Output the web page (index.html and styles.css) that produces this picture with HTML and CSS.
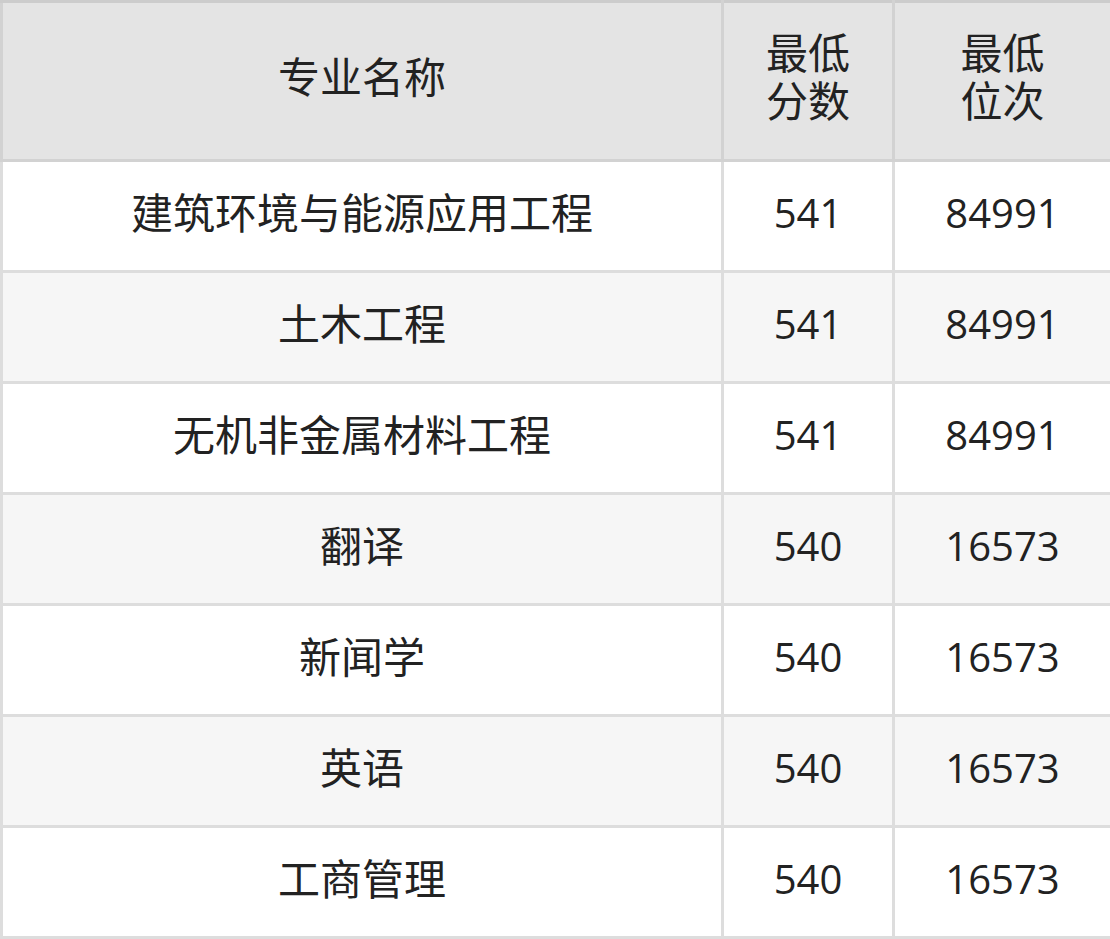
FILE: index.html
```html
<!DOCTYPE html>
<html lang="zh-CN">
<head>
<meta charset="utf-8">
<title>专业分数</title>
<link rel="stylesheet" href="styles.css">
</head>
<body>
<table class="score-table">
  <colgroup>
    <col class="col-name">
    <col class="col-score">
    <col class="col-rank">
  </colgroup>
  <thead>
    <tr>
      <th>专业名称</th>
      <th>最低<br>分数</th>
      <th>最低<br>位次</th>
    </tr>
  </thead>
  <tbody>
    <tr><td>建筑环境与能源应用工程</td><td class="num">541</td><td class="num">84991</td></tr>
    <tr><td>土木工程</td><td class="num">541</td><td class="num">84991</td></tr>
    <tr><td>无机非金属材料工程</td><td class="num">541</td><td class="num">84991</td></tr>
    <tr><td>翻译</td><td class="num">540</td><td class="num">16573</td></tr>
    <tr><td>新闻学</td><td class="num">540</td><td class="num">16573</td></tr>
    <tr><td>英语</td><td class="num">540</td><td class="num">16573</td></tr>
    <tr><td>工商管理</td><td class="num">540</td><td class="num">16573</td></tr>
  </tbody>
</table>
</body>
</html>
```

FILE: styles.css
```css
html, body {
  margin: 0;
  padding: 0;
  background: #ffffff;
}

.score-table {
  width: 1110px;
  border-collapse: collapse;
  table-layout: fixed;
  font-family: "Open Sans", "Noto Sans CJK SC", sans-serif;
  color: #222222;
}

.col-name { width: 721px; }
.col-score { width: 171px; }
.col-rank { width: 218px; }

.score-table th,
.score-table td {
  border: 3px solid #dddddd;
  padding: 0;
  text-align: center;
  vertical-align: middle;
  font-size: 42px;
  font-weight: 400;
}

.score-table th {
  background: #e4e4e4;
  height: 148px;
  padding-bottom: 8px;
  line-height: 48px;
  border-color: #d2d2d2;
}

.score-table thead tr th {
  border-top-color: #cccccc;
}

.score-table td {
  height: 102px;
  padding-bottom: 6px;
  line-height: 48px;
}

.score-table td.num {
  font-size: 40px;
}

.score-table tbody tr:nth-child(even) td {
  background: #f6f6f6;
}
```
